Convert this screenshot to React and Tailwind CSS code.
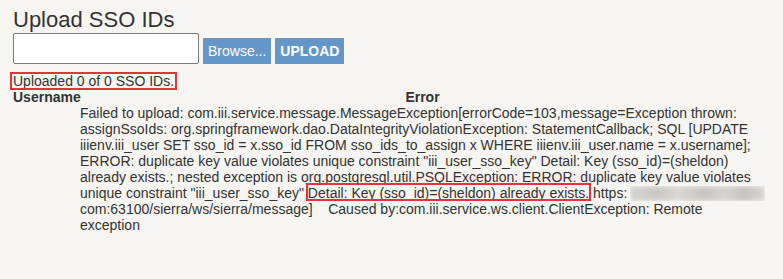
import React from "react";

function RedBox({ children, className }) {
  return (
    <span className="relative">
      {children}
      <span className={"pointer-events-none absolute border-2 border-[#e5333b] " + className} />
    </span>
  );
}

export default function App() {
  return (
    <div className="min-h-screen bg-[#f6f5f1] pl-[13px] pt-[7px] font-['Liberation_Sans',Arial,sans-serif] text-[#333333]">
      <h1 className="text-[22px] leading-[25px] font-normal">Upload SSO IDs</h1>

      <div className="mt-[1px] flex items-end gap-[4px]">
        <div className="h-[31px] w-[186px] rounded-[2px] border border-[#7a7a7a] bg-white" />
        <button className="h-[26px] bg-[#6496c7] px-[5px] text-[14px] leading-[16px] text-white">
          Browse...
        </button>
        <button className="h-[26px] bg-[#6496c7] px-[5px] text-[14px] font-bold leading-[16px] text-white">
          UPLOAD
        </button>
      </div>

      <div className="mt-[9px] text-[14px] leading-[16px]">
        <RedBox className="-left-[3px] -right-[3px] -top-[1px] -bottom-[1px]">
          Uploaded 0 of 0 SSO IDs.
        </RedBox>
      </div>

      <div className="grid grid-cols-[67px_685px] text-[14px] leading-[16px]">
        <div className="font-bold">Username</div>
        <div className="text-center font-bold">Error</div>
        <div />
        <div className="whitespace-pre">
          <div>Failed to upload: com.iii.service.message.MessageException[errorCode=103,message=Exception thrown:</div>
          <div>assignSsoIds: org.springframework.dao.DataIntegrityViolationException: StatementCallback; SQL [UPDATE</div>
          <div>iiienv.iii_user SET sso_id = x.sso_id FROM sso_ids_to_assign x WHERE iiienv.iii_user.name = x.username];</div>
          <div>ERROR: duplicate key value violates unique constraint "iii_user_sso_key" Detail: Key (sso_id)=(sheldon)</div>
          <div>already exists.; nested exception is org.postgresql.util.PSQLException: ERROR: duplicate key value violates</div>
          <div>
            {'unique constraint "iii_user_sso_key" '}
            <RedBox className="-left-[2px] -right-[2px] -top-[2px] bottom-0">
              Detail: Key (sso_id)=(sheldon) already exists.
            </RedBox>
            {" https:"}
            <span className="relative ml-[3px] inline-block h-[15px] w-[135px] align-[-3px] overflow-hidden">
              <span className="absolute inset-0 bg-[linear-gradient(90deg,#d6d5d2,#c9c8c5_20%,#d9d8d5_35%,#c6c5c2_55%,#d4d3d0_70%,#c4c3c0_85%,#d8d7d4)] blur-[2px]" />
            </span>
          </div>
          <div>{"com:63100/sierra/ws/sierra/message]    Caused by:com.iii.service.ws.client.ClientException: Remote"}</div>
          <div>exception</div>
        </div>
      </div>
    </div>
  );
}
